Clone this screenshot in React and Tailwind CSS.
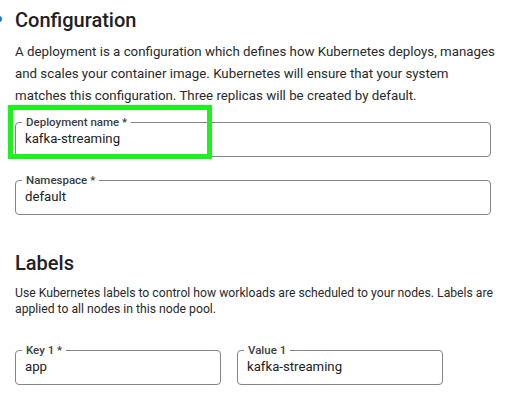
const Field = ({ label, value, className = '', highlight = false }) => (
  <div
    className={`relative flex h-[35px] items-center rounded-[4px] border border-[#80868b] pb-[2px] pl-[9px] ${className}`}
  >
    <span className="absolute left-[6px] top-[-8px] bg-white px-1 text-[11.5px] font-medium leading-[14px] text-[#3c4043]">
      {label}
    </span>
    <span className="text-[13.2px] text-[#202124]">{value}</span>
    {highlight ? (
      <div className="absolute left-[-8px] top-[-18px] h-[54px] w-[204px] border-[5px] border-[#1ef21e]" />
    ) : null}
  </div>
);

const App = () => {
  return (
    <div
      className="relative min-h-screen overflow-hidden bg-white px-[15px] text-[#202124]"
      style={{ fontFamily: 'Roboto, "Liberation Sans", sans-serif' }}
    >
      <span className="absolute left-[-4px] top-[16px] h-[6px] w-[6px] rounded-full bg-[#1a73e8]" />

      <h2 className="pt-[6px] text-[20px] font-medium leading-[28px]">Configuration</h2>
      <p className="mr-[-12px] mt-[7px] text-[13.3px] leading-[22px] text-[#282a2d]">
        A deployment is a configuration which defines how Kubernetes deploys, manages
        and scales your container image. Kubernetes will ensure that your system
        matches this configuration. Three replicas will be created by default.
      </p>

      <Field
        className="mt-[15px]"
        label="Deployment name *"
        value="kafka-streaming"
        highlight
      />
      <Field className="mt-[23px]" label="Namespace *" value="default" />

      <h2 className="mt-[34px] text-[20px] font-medium leading-[28px]">Labels</h2>
      <p className="mr-[-12px] mt-[8px] text-[12.2px] leading-[16px] text-[#282a2d]">
        Use Kubernetes labels to control how workloads are scheduled to your nodes. Labels
        are applied to all nodes in this node pool.
      </p>

      <div className="mt-[33px] flex gap-4">
        <Field className="w-[206px]" label="Key 1 *" value="app" />
        <Field className="w-[206px]" label="Value 1" value="kafka-streaming" />
      </div>
    </div>
  );
};

export default App;
